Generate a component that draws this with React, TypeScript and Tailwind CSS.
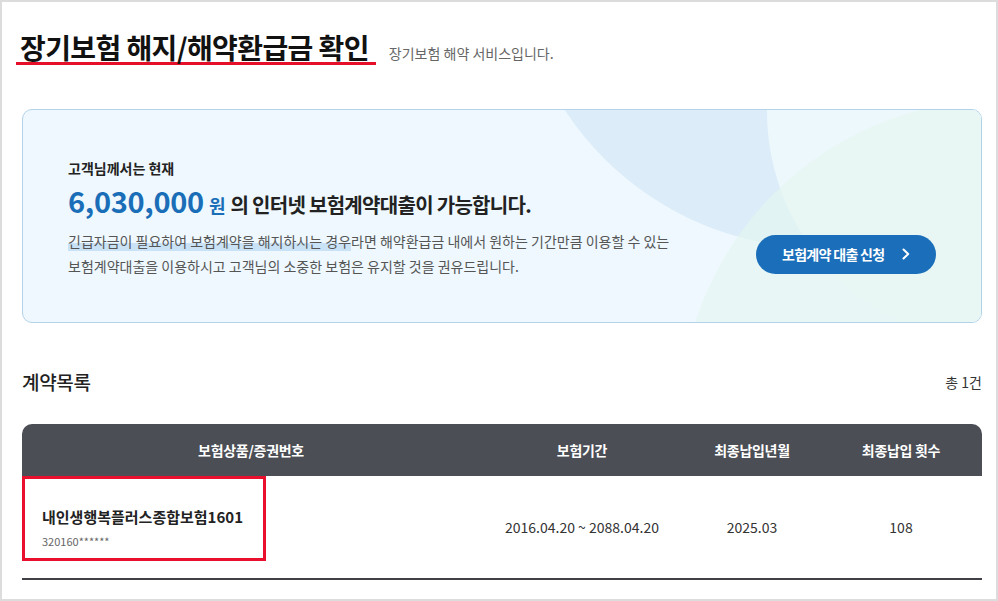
import React from "react";

const font = "font-['Noto_Sans_CJK_KR','Noto_Sans',sans-serif]";

function BannerDecor() {
    return (
        <svg className="absolute inset-0 h-full w-full" viewBox="0 0 958 212" preserveAspectRatio="none">
            <circle cx="797" cy="-167" r="305" fill="#dcedf9" />
            <circle cx="977" cy="1" r="233" fill="#edf8fd" />
            <circle cx="977" cy="310" r="320" fill="#e4f6ee" fillOpacity="0.6" />
        </svg>
    );
}

export default function App() {
    const columns = [
        { label: "보험상품/증권번호" },
        { label: "보험기간" },
        { label: "최종납입년월" },
        { label: "최종납입 횟수" },
    ];

    return (
        <div className={`${font} w-[998px] h-[601px] overflow-hidden border-2 border-[#dcdcdc] bg-white text-[#222]`}>
            <div className="pl-[20px] pr-[14px] pt-[30px]">
                {/* page title */}
                <div className="flex items-baseline">
                    <h1 className="-ml-[6px] inline-block border-b-[3px] border-[#e60f2a] pl-[4px] pr-[7px] text-[28px] font-bold leading-[30px] tracking-[-0.6px] text-[#111]">
                        장기보험 해지/해약환급금 확인
                    </h1>
                    <span className="ml-[13px] text-[14px] text-[#666]">장기보험 해약 서비스입니다.</span>
                </div>

                {/* loan banner */}
                <div className="relative mt-[44px] h-[214px] overflow-hidden rounded-[10px] border border-[#b3d4e8] bg-[#eef8fe]">
                    <BannerDecor />
                    <div className="relative px-[45px] pt-[48px]">
                        <p className="text-[14px] font-bold leading-[20px] text-[#222]">고객님께서는 현재</p>
                        <div className="mt-[2px] flex items-baseline leading-[40px]">
                            <span className="text-[29px] font-bold tracking-[-0.3px] text-[#1a6eb8]">6,030,000</span>
                            <span className="ml-[5px] text-[18px] font-bold text-[#1a6eb8]">원</span>
                            <span className="ml-[5px] text-[20px] font-bold tracking-[-0.7px] text-[#222]">
                                의 인터넷 보험계약대출이 가능합니다.
                            </span>
                        </div>
                        <div className="mt-[4px] flex items-center justify-between">
                            <p className="text-[14px] leading-[25px] text-[#555]">
                                <span className="bg-[linear-gradient(to_bottom,transparent_60%,#c9e2f6_60%)]">
                                    긴급자금이 필요하여 보험계약을 해지하시는 경우
                                </span>
                                라면 해약환급금 내에서 원하는 기간만큼 이용할 수 있는
                                <br />
                                보험계약대출을 이용하시고 고객님의 소중한 보험은 유지할 것을 권유드립니다.
                            </p>
                            <button className="flex h-[39px] w-[180px] items-center justify-between rounded-full bg-[#1b6fba] pl-[26px] pr-[26px] text-[14px] font-bold tracking-[-0.7px] text-white">
                                <span>보험계약 대출 신청</span>
                                <svg width="8" height="12" viewBox="0 0 8 12" fill="none">
                                    <path d="M1.5 1.5 L6.2 6 L1.5 10.5" stroke="white" strokeWidth="2" strokeLinecap="round" strokeLinejoin="round" />
                                </svg>
                            </button>
                        </div>
                    </div>
                </div>

                {/* contract list */}
                <div className="mt-[46px] flex items-center justify-between">
                    <h2 className="text-[19px] font-medium leading-[26px] tracking-[-0.3px] text-[#222]">계약목록</h2>
                    <span className="text-[14px] text-[#333]">총 1건</span>
                </div>

                <div className="mt-[29px]">
                    <div className="grid h-[52px] grid-cols-[458px_204px_136px_162px] items-center rounded-t-[10px] bg-[#4b4e55] text-[14px] font-bold tracking-[-0.3px] text-white">
                        {columns.map((c) => (
                            <div key={c.label} className="text-center">
                                {c.label}
                            </div>
                        ))}
                    </div>
                    <div className="relative grid h-[104px] grid-cols-[458px_204px_136px_162px] border-b-2 border-[#3f4147] text-[14px] text-[#333]">
                        <div className="pl-[20px] pt-[30px]">
                            <p className="text-[15px] font-bold leading-[22px] text-[#222]">
                                내인생행복플러스종합보험1601
                            </p>
                            <p className="mt-[5px] text-[11px] leading-[16px] text-[#666]">320160******</p>
                        </div>
                        <div className="flex items-center justify-center">2016.04.20 ~ 2088.04.20</div>
                        <div className="flex items-center justify-center">2025.03</div>
                        <div className="flex items-center justify-center">108</div>
                        {/* highlight box */}
                        <div className="absolute left-0 top-0 h-[85px] w-[244px] border-[3px] border-[#e8102c]" />
                    </div>
                </div>
            </div>
        </div>
    );
}
